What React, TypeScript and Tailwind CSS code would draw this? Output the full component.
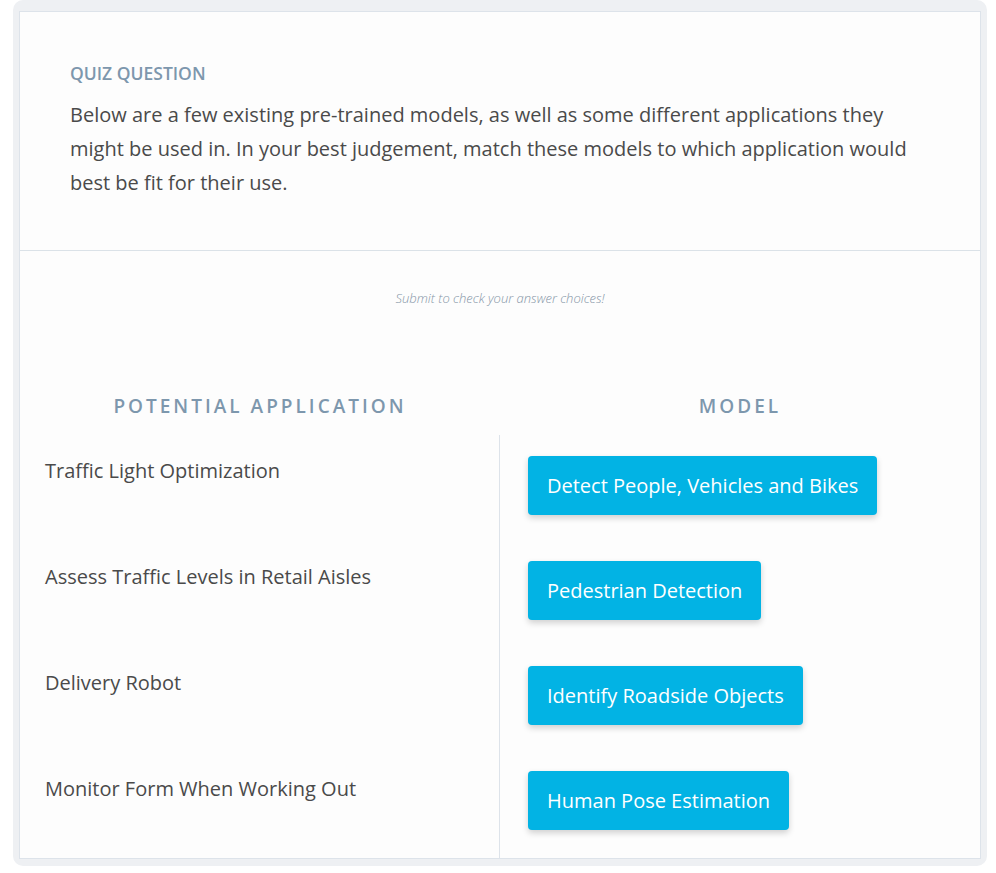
const rows = [
  { app: "Traffic Light Optimization", model: "Detect People, Vehicles and Bikes" },
  { app: "Assess Traffic Levels in Retail Aisles", model: "Pedestrian Detection" },
  { app: "Delivery Robot", model: "Identify Roadside Objects" },
  { app: "Monitor Form When Working Out", model: "Human Pose Estimation" },
];

function App() {
  return (
    <div className="w-[996px] h-[873px] bg-white font-['Open_Sans',sans-serif] text-[#4a4a4a]">
      <div className="ml-[13px] w-[974px] rounded-[10px] bg-[#eef0f3] px-[6px] pt-[11px] pb-[7px]">
        <div className="border border-[#dde3ea] bg-[#fdfdfd]">
          <div className="px-[50px] pt-[49px] pb-[50px] border-b border-[#dbe2e8]">
            <h3 className="text-[17.5px] font-semibold text-[#7d97ad] leading-[24px]">QUIZ QUESTION</h3>
            <p className="mt-[13px] text-[20px] leading-[34px] text-[#4a4a4a]">
              Below are a few existing pre-trained models, as well as some different applications they
              might be used in. In your best judgement, match these models to which application would
              best be fit for their use.
            </p>
          </div>
          <p className="pt-[37px] text-center text-[13px] italic font-light text-[#8696a7] leading-[20px]">
            Submit to check your answer choices!
          </p>
          <div className="mt-[85px] grid grid-cols-2">
            <h4 className="text-center text-[19px] font-semibold tracking-[3px] text-[#7d97ad] leading-[26px]">
              POTENTIAL APPLICATION
            </h4>
            <h4 className="text-center text-[19px] font-semibold tracking-[3px] text-[#7d97ad] leading-[26px]">
              MODEL
            </h4>
          </div>
          <div className="mt-[16px] grid grid-cols-[480px_1fr]">
            <div className="border-r border-[#dde3ea] pl-[25px] pt-[22px] flex flex-col gap-[78px]">
              {rows.map((r) => (
                <div key={r.app} className="text-[20px] leading-[28px]">
                  {r.app}
                </div>
              ))}
            </div>
            <div className="pl-[28px] pt-[21px] pb-[28px] flex flex-col gap-[46px]">
              {rows.map((r) => (
                <div key={r.model}>
                  <button className="h-[59px] rounded-[4px] bg-[#02b3e4] px-[19px] text-[20px] text-white shadow-[0_3px_6px_rgba(0,0,0,0.18)]">
                    {r.model}
                  </button>
                </div>
              ))}
            </div>
          </div>
        </div>
      </div>
    </div>
  );
}

export default App;
